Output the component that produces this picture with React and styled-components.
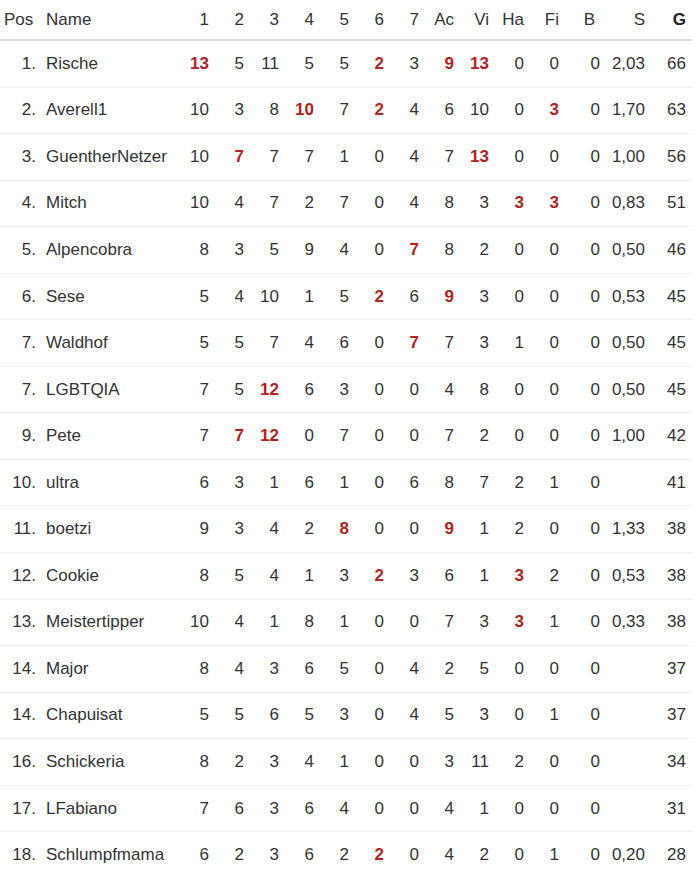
import React from "react";
import styled, { createGlobalStyle } from "styled-components";

const GlobalStyle = createGlobalStyle`
  html, body {
    margin: 0;
    padding: 0;
    background-color: #ffffff;
  }
  body {
    font-family: "Liberation Sans", Arial, sans-serif;
    color: #333333;
  }
`;

const Table = styled.table`
  width: 692px;
  table-layout: fixed;
  border-collapse: collapse;
  font-family: "Liberation Sans", Arial, sans-serif;
  font-size: 17px;
  color: #333333;
`;

const HeadCell = styled.th`
  height: 39px;
  padding: 0 ${props => props.padRight || 6}px 0 ${props => props.padLeft || 0}px;
  font-family: "Liberation Sans", Arial, sans-serif;
  font-size: 17px;
  font-weight: ${props => (props.strong ? 700 : 400)};
  color: ${props => (props.strong ? "#222" : "#333")};
  text-align: ${props => props.align || "right"};
  border-bottom: 2px solid #dddddd;
  white-space: nowrap;
`;

const Row = styled.tr`
  border-bottom: 1px solid #eeeeee;
`;

const Cell = styled.td`
  height: 45.56px;
  padding: 0 ${props => props.padRight || 6}px 0 ${props => props.padLeft || 0}px;
  font-family: "Liberation Sans", Arial, sans-serif;
  font-size: 17px;
  text-align: ${props => props.align || "right"};
  white-space: nowrap;
  font-weight: ${props => (props.hot ? 700 : 400)};
  color: ${props => (props.hot ? "#b22222" : "#333")};
`;

const columns = [
  { key: "Pos", width: 40, align: "left", padLeft: 4, padRight: 4 },
  { key: "Name", width: 140, align: "left", padLeft: 6 },
  { key: "1", width: 35 },
  { key: "2", width: 35 },
  { key: "3", width: 35 },
  { key: "4", width: 35 },
  { key: "5", width: 35 },
  { key: "6", width: 35 },
  { key: "7", width: 35 },
  { key: "Ac", width: 35 },
  { key: "Vi", width: 35 },
  { key: "Ha", width: 35 },
  { key: "Fi", width: 35 },
  { key: "B", width: 41, headPad: 11 },
  { key: "S", width: 45 },
  { key: "G", width: 41, strong: true }
];

// values marked with * are highlighted
const rows = [
  ["1.", "Rische", "13*", "5", "11", "5", "5", "2*", "3", "9*", "13*", "0", "0", "0", "2,03", "66"],
  ["2.", "Averell1", "10", "3", "8", "10*", "7", "2*", "4", "6", "10", "0", "3*", "0", "1,70", "63"],
  ["3.", "GuentherNetzer", "10", "7*", "7", "7", "1", "0", "4", "7", "13*", "0", "0", "0", "1,00", "56"],
  ["4.", "Mitch", "10", "4", "7", "2", "7", "0", "4", "8", "3", "3*", "3*", "0", "0,83", "51"],
  ["5.", "Alpencobra", "8", "3", "5", "9", "4", "0", "7*", "8", "2", "0", "0", "0", "0,50", "46"],
  ["6.", "Sese", "5", "4", "10", "1", "5", "2*", "6", "9*", "3", "0", "0", "0", "0,53", "45"],
  ["7.", "Waldhof", "5", "5", "7", "4", "6", "0", "7*", "7", "3", "1", "0", "0", "0,50", "45"],
  ["7.", "LGBTQIA", "7", "5", "12*", "6", "3", "0", "0", "4", "8", "0", "0", "0", "0,50", "45"],
  ["9.", "Pete", "7", "7*", "12*", "0", "7", "0", "0", "7", "2", "0", "0", "0", "1,00", "42"],
  ["10.", "ultra", "6", "3", "1", "6", "1", "0", "6", "8", "7", "2", "1", "0", "", "41"],
  ["11.", "boetzi", "9", "3", "4", "2", "8*", "0", "0", "9*", "1", "2", "0", "0", "1,33", "38"],
  ["12.", "Cookie", "8", "5", "4", "1", "3", "2*", "3", "6", "1", "3*", "2", "0", "0,53", "38"],
  ["13.", "Meistertipper", "10", "4", "1", "8", "1", "0", "0", "7", "3", "3*", "1", "0", "0,33", "38"],
  ["14.", "Major", "8", "4", "3", "6", "5", "0", "4", "2", "5", "0", "0", "0", "", "37"],
  ["14.", "Chapuisat", "5", "5", "6", "5", "3", "0", "4", "5", "3", "0", "1", "0", "", "37"],
  ["16.", "Schickeria", "8", "2", "3", "4", "1", "0", "0", "3", "11", "2", "0", "0", "", "34"],
  ["17.", "LFabiano", "7", "6", "3", "6", "4", "0", "0", "4", "1", "0", "0", "0", "", "31"],
  ["18.", "Schlumpfmama", "6", "2", "3", "6", "2", "2*", "0", "4", "2", "0", "1", "0", "0,20", "28"]
];

const Standings = () => (
  <Table>
    <colgroup>
      {columns.map(c => (
        <col key={c.key} style={{ width: c.width }} />
      ))}
    </colgroup>
    <thead>
      <tr>
        {columns.map(c => (
          <HeadCell
            key={c.key}
            align={c.align}
            padLeft={c.padLeft}
            padRight={c.headPad || c.padRight}
            strong={c.strong}
          >
            {c.key}
          </HeadCell>
        ))}
      </tr>
    </thead>
    <tbody>
      {rows.map((row, i) => (
        <Row key={i}>
          {row.map((value, j) => {
            const col = columns[j];
            const hot = value.endsWith("*");
            return (
              <Cell
                key={j}
                align={j === 1 ? "left" : "right"}
                padLeft={col.padLeft}
                padRight={col.padRight}
                hot={hot}
              >
                {hot ? value.slice(0, -1) : value}
              </Cell>
            );
          })}
        </Row>
      ))}
    </tbody>
  </Table>
);

export default function App() {
  return (
    <>
      <GlobalStyle />
      <Standings />
    </>
  );
}
